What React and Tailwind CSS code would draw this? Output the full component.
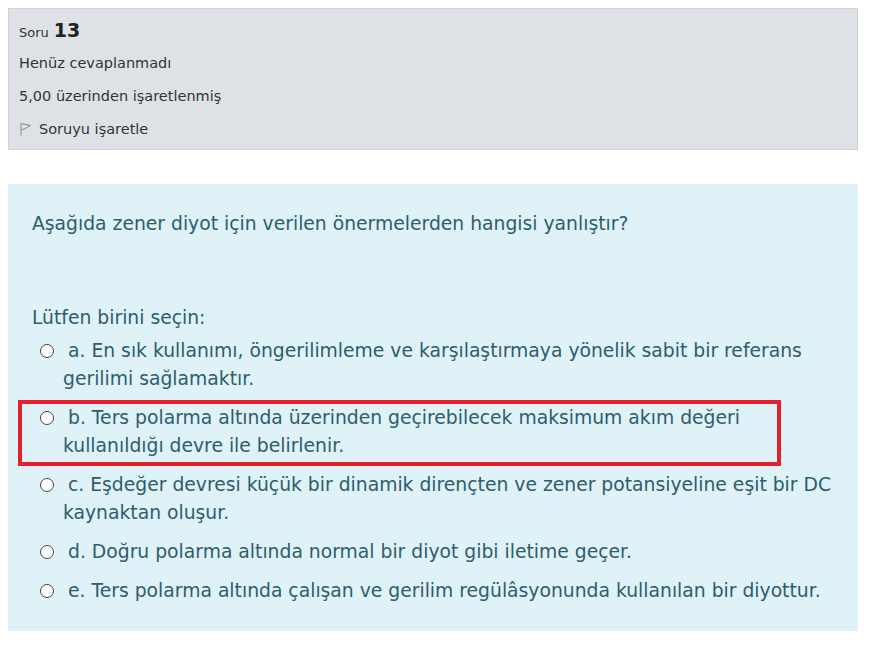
import React from 'react';

const options = [
  { letter: 'a', text: 'En sık kullanımı, öngerilimleme ve karşılaştırmaya yönelik sabit bir referans gerilimi sağlamaktır.' },
  { letter: 'b', text: 'Ters polarma altında üzerinden geçirebilecek maksimum akım değeri kullanıldığı devre ile belirlenir.', marked: true },
  { letter: 'c', text: 'Eşdeğer devresi küçük bir dinamik dirençten ve zener potansiyeline eşit bir DC kaynaktan oluşur.' },
  { letter: 'd', text: 'Doğru polarma altında normal bir diyot gibi iletime geçer.' },
  { letter: 'e', text: 'Ters polarma altında çalışan ve gerilim regülâsyonunda kullanılan bir diyottur.' },
];

function Flag() {
  return (
    <svg width="13" height="14" viewBox="0 0 13 14" fill="none" stroke="#8a8a8a" strokeWidth="1">
      <path d="M2 1 V13.5" />
      <path d="M2 1.5 L11.5 3.5 L6 6.5 L2 8" />
    </svg>
  );
}

function Option({ letter, text, marked }) {
  return (
    <div className="relative pb-[11px]">
      {marked && (
        <div className="pointer-events-none absolute left-[-14px] top-[-4px] h-[66px] w-[763px] border-4 border-[#e3202b]" />
      )}
      <div className="pl-[31px] -indent-[23px]">
        <span className="mr-[14px] inline-block h-[14px] w-[14px] rounded-full border border-[#444] bg-white align-[-1px]" />
        {letter}. {text}
      </div>
    </div>
  );
}

export default function App() {
  return (
    <div className="min-h-[657px] bg-white p-2 font-['DejaVu_Sans',Verdana,sans-serif]">
      <div className="w-[850px] border border-[#cfd3d8] bg-[#dee2e6] px-[10px] pt-[10px] pb-[9px] text-[14.5px] text-[#333]">
        <div className="flex h-[22px] items-baseline gap-[5px] leading-[22px]">
          <span className="text-[13px]">Soru</span>
          <span className="text-[19px] font-bold leading-[22px] text-[#222]">13</span>
        </div>
        <div className="mt-[11px] leading-[22px]">Henüz cevaplanmadı</div>
        <div className="mt-[11px] leading-[22px]">5,00 üzerinden işaretlenmiş</div>
        <div className="mt-[11px] flex items-center gap-[7px] leading-[22px]">
          <Flag />
          <span>Soruyu işaretle</span>
        </div>
      </div>

      <div className="mt-[34px] w-[850px] bg-[#def2f8] pl-[24px] pr-[24px] pt-[26px] pb-[15px] text-[18.75px] leading-[28px] text-[#2f5d6b]">
        <p>Aşağıda zener diyot için verilen önermelerden hangisi yanlıştır?</p>
        <p className="mt-[66px]">Lütfen birini seçin:</p>
        <div className="mt-[5px]">
          {options.map((o) => (
            <Option key={o.letter} {...o} />
          ))}
        </div>
      </div>
    </div>
  );
}
